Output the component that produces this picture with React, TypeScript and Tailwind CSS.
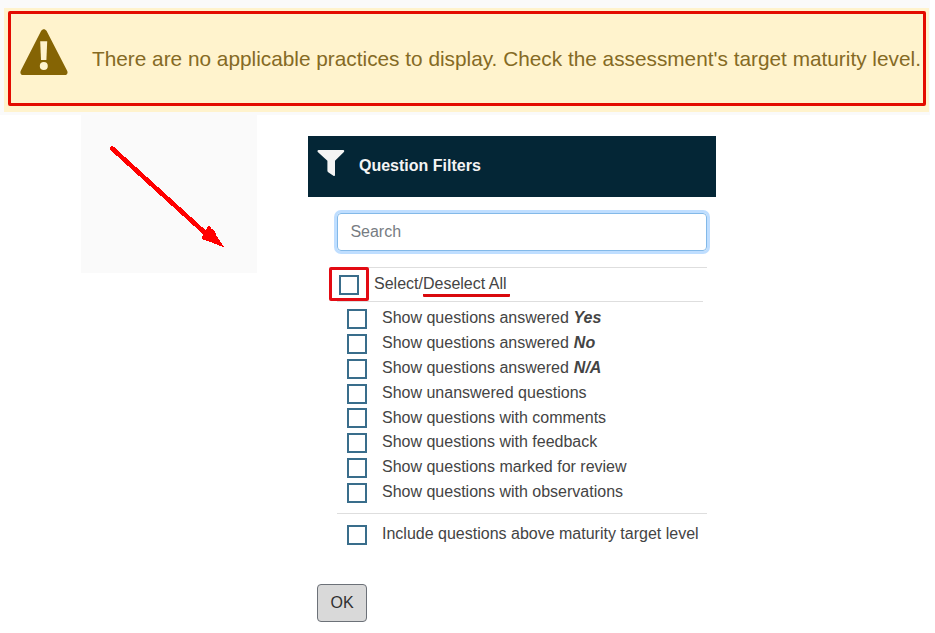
import React from 'react';

type Filter = { label: string; answer?: string };

const filters: Filter[] = [
  { label: 'Show questions answered', answer: 'Yes' },
  { label: 'Show questions answered', answer: 'No' },
  { label: 'Show questions answered', answer: 'N/A' },
  { label: 'Show unanswered questions' },
  { label: 'Show questions with comments' },
  { label: 'Show questions with feedback' },
  { label: 'Show questions marked for review' },
  { label: 'Show questions with observations' },
];

function Box() {
  return <span className="block size-5 shrink-0 border-2 border-[#396d8b] bg-white" />;
}

function WarningIcon() {
  return (
    <svg className="mt-[15px] ml-[9px] h-[47px] w-[48px] shrink-0" viewBox="0 0 48 47">
      <path
        d="M21.2 1.8C22.5-.4 25.2-.4 26.5 1.8L47 41.5C48.4 44 47 46 44.5 46H3.4C.9 46-.4 44 .9 41.5Z"
        fill="#856404"
      />
      <path d="M20.2 12.3H27.2L26.4 31H21Z" fill="#fff3cd" />
      <circle cx="23.8" cy="37" r="4" fill="#fff3cd" />
    </svg>
  );
}

function FilterIcon() {
  return (
    <svg className="ml-[9px] mt-[14px] h-[27px] w-[28px] shrink-0" viewBox="0 0 28 27">
      <path
        d="M1.6 0H26.2C27.3 0 27.6 1.1 26.9 1.9L18 10.8V24.9C18 25.8 17.1 26.2 16.4 25.7L11.2 22.2C10.6 21.8 10.4 21.4 10.4 20.8V10.8L.8 1.9C.1 1.1.5 0 1.6 0Z"
        fill="#f4f4f4"
      />
    </svg>
  );
}

function Arrow() {
  return (
    <svg className="h-[158px] w-[176px]" viewBox="0 0 176 158" fill="none" shapeRendering="crispEdges">
      <path d="M31.2 33.5L128 121.5" stroke="#ff0000" strokeWidth="4.6" strokeLinecap="round" />
      <path d="M128 110L130.5 113.5L134 116L135.5 121L143.5 132.5L127 126L120.5 124L122.5 118Z" fill="#ff0000" />
    </svg>
  );
}

export default function App() {
  return (
    <main className="h-[633px] w-[935px] overflow-hidden bg-white font-['Liberation_Sans',Arial,sans-serif] text-base text-[#444]">
      <section className="h-[115px] w-[930px] bg-[#fafafa] pt-2 pl-1">
        <div className="h-[104px] w-[925px] bg-[#fff3cd] pt-[3px] pl-1">
          <div className="flex h-[95px] w-[918px] rounded-[2px] border-3 border-[#e30b00]">
            <WarningIcon />
            <p className="mt-[33px] ml-6 text-[20.8px] leading-6 whitespace-nowrap text-[#856a24]">
              There are no applicable practices to display. Check the assessment's target maturity level.
            </p>
          </div>
        </div>
      </section>
      <div className="flex items-start pl-[81px]">
        <div className="h-[158px] w-[176px] bg-[#fafafa]">
          <Arrow />
        </div>
        <section className="mt-[21px] ml-[51px] w-[408px]">
          <header className="flex h-[61px] bg-[#042636]">
            <FilterIcon />
            <h1 className="mt-[18px] ml-[14px] text-base leading-6 font-bold text-[#f4f4f4]">Question Filters</h1>
          </header>
          <div className="pt-4 pl-[29px]">
            <input
              aria-label="Search"
              placeholder="Search"
              className="block h-[38px] w-[370px] rounded-[4px] border border-[#83b9e8] px-[12.4px] text-base shadow-[0_0_0_3px_#bfdeff] outline-none placeholder:text-[#777c82]"
            />
            <div className="mt-4 flex h-[34px] w-[370px] items-start border-t border-[#dedede]">
              <div className="-mt-px -ml-2 flex h-[34px] w-10 shrink-0 items-center justify-center rounded-[2px] border-3 border-[#e30b13]">
                <span className="mt-[2px]"><Box /></span>
              </div>
              <p className="mt-1 ml-[5px] leading-6 whitespace-nowrap">
                Select/<span className="inline-block h-[25px] w-[87px] rounded-[1px] border-b-3 border-[#d9090d]">Deselect All</span>
              </p>
            </div>
            <div className="w-[366px] border-t border-[#dedede]" />
            <ul className="mt-[4.2px] ml-[10px]">
              {filters.map((f, i) => (
                <li key={i} className="flex h-[24.8px] items-start">
                  <span className="mt-[3px]"><Box /></span>
                  <span className="mt-[0.2px] ml-[15px] leading-6 whitespace-nowrap">
                    {f.label}
                    {f.answer && <b className="ml-[0.6px] italic"> {f.answer}</b>}
                  </span>
                </li>
              ))}
            </ul>
            <div className="mt-[8.8px] w-[370px] border-t border-[#dedede]" />
            <div className="mt-[8px] ml-[10px] flex h-6 items-start">
              <span className="mt-[3px]"><Box /></span>
              <span className="ml-[15px] leading-6 whitespace-nowrap">Include questions above maturity target level</span>
            </div>
          </div>
          <button className="mt-[38px] ml-[9px] block h-[38px] w-[50px] rounded-[4px] border border-[#6c7178] bg-[#d9d9d9] text-base text-[#303030]">
            OK
          </button>
        </section>
      </div>
    </main>
  );
}
